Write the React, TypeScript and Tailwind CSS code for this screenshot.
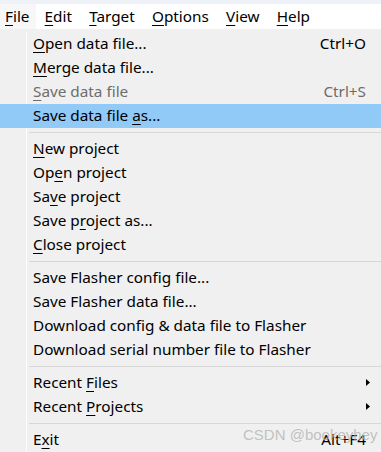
import React from "react";

type Item =
  | { type: "sep" }
  | {
      type: "item";
      label: string;
      u?: number;
      shortcut?: string;
      disabled?: boolean;
      active?: boolean;
      sub?: boolean;
    };

const items: Item[] = [
  { type: "item", label: "Open data file...", u: 0, shortcut: "Ctrl+O" },
  { type: "item", label: "Merge data file...", u: 0 },
  { type: "item", label: "Save data file", u: 0, shortcut: "Ctrl+S", disabled: true },
  { type: "item", label: "Save data file as...", u: 15, active: true },
  { type: "sep" },
  { type: "item", label: "New project", u: 0 },
  { type: "item", label: "Open project", u: 2 },
  { type: "item", label: "Save project", u: 2 },
  { type: "item", label: "Save project as...", u: 6 },
  { type: "item", label: "Close project", u: 0 },
  { type: "sep" },
  { type: "item", label: "Save Flasher config file..." },
  { type: "item", label: "Save Flasher data file..." },
  { type: "item", label: "Download config & data file to Flasher" },
  { type: "item", label: "Download serial number file to Flasher" },
  { type: "sep" },
  { type: "item", label: "Recent Files", u: 7, sub: true },
  { type: "item", label: "Recent Projects", u: 7, sub: true },
  { type: "sep" },
  { type: "item", label: "Exit", u: 1, shortcut: "Alt+F4" },
];

function Label({ text, u }: { text: string; u?: number }) {
  if (u === undefined) return <span>{text}</span>;
  return (
    <span>
      {text.slice(0, u)}
      <span className="underline underline-offset-[3px] decoration-1">{text[u]}</span>
      {text.slice(u + 1)}
    </span>
  );
}

const menus: { label: string; u: number }[] = [
  { label: "File", u: 0 },
  { label: "Edit", u: 0 },
  { label: "Target", u: 0 },
  { label: "Options", u: 0 },
  { label: "View", u: 0 },
  { label: "Help", u: 0 },
];

export default function App() {
  return (
    <div
      className="relative w-[381px] h-[452px] overflow-hidden bg-[#f0f0f0] text-black text-[15.3px] leading-none"
      style={{ fontFamily: '"Noto Sans", "Open Sans", sans-serif' }}
    >
      <div className="h-[4px] bg-[#eef2f8]" />
      <div className="h-[25px] bg-white flex items-stretch">
        {menus.map((m, i) => (
          <div
            key={m.label}
            className={
              i === 0
                ? "flex items-center pl-[5px] bg-[#f7f7f7] w-[36px]"
                : "flex items-center px-[8.6px]"
            }
          >
            <Label text={m.label} u={m.u} />
          </div>
        ))}
      </div>
      <div className="pt-[3px]">
        {items.map((it, i) =>
          it.type === "sep" ? (
            <div key={i} className="flex h-[9px]">
              <div className="w-[27px] shrink-0 border-r border-[#fbfbfb]" />
              <div className="flex-1 ml-[2px] pt-[4px]">
                <div className="h-px bg-[#d7d7d7]" />
              </div>
            </div>
          ) : (
            <div
              key={i}
              className={`flex h-[24px] items-center ${it.active ? "bg-[#91c9f7]" : ""}`}
            >
              <div
                className={`w-[27px] h-full shrink-0 ${it.active ? "" : "border-r border-[#fbfbfb]"}`}
              />
              <div
                className={`flex-1 flex items-center justify-between pl-[6px] pr-[15px] ${
                  it.disabled ? "text-[#6d6d6d]" : ""
                }`}
              >
                <Label text={it.label} u={it.u} />
                {it.shortcut && <span>{it.shortcut}</span>}
                {it.sub && (
                  <svg width="4" height="7" viewBox="0 0 4 7" className="mr-[-4px]">
                    <path d="M0 0 L4 3.5 L0 7 Z" fill="#000" />
                  </svg>
                )}
              </div>
            </div>
          )
        )}
      </div>
      <div
        className="absolute left-[243px] top-[427px] text-[15px] text-[#b4b4b4]/80 leading-none"
        style={{ fontFamily: '"Liberation Sans", Arial, sans-serif' }}
      >
        CSDN @bookeyhey
      </div>
    </div>
  );
}
